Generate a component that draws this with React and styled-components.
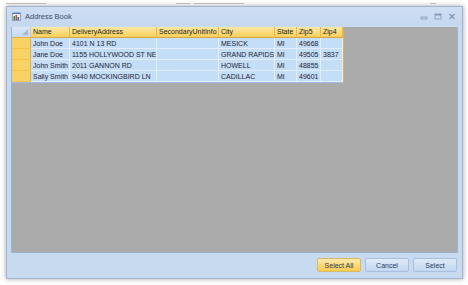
import React from "react";
import styled, { createGlobalStyle } from "styled-components";

const Global = createGlobalStyle`
  html, body { margin: 0; padding: 0; background: #ffffff; }
  body { font-family: "Liberation Sans", Arial, sans-serif; width: 468px; height: 285px; overflow: hidden; }
`;

const Page = styled.div`
  position: relative;
  width: 468px;
  height: 285px;
  padding: 6px 0 0 6px;
  box-sizing: border-box;
`;

const BehindText = styled.div`
  position: absolute;
  top: 3px;
  left: ${(p) => p.$x}px;
  width: ${(p) => p.$w}px;
  height: 1px;
  background: #9a9a9a;
  opacity: 0.6;
`;

const Window = styled.div`
  width: 457px;
  height: 273px;
  box-sizing: border-box;
  border: 1px solid #9fb4d2;
  background: #c8daf0;
  box-shadow: 0 0 5px rgba(0, 0, 0, 0.35);
  display: flex;
  flex-direction: column;
`;

const TitleBar = styled.div`
  height: 18px;
  display: flex;
  align-items: center;
  padding: 0 6px 0 5px;
  background: linear-gradient(#cfdff3, #c4d7ef);
  gap: 4px;
`;

const Title = styled.span`
  font-size: 7.5px;
  color: #3b4d66;
  flex: 1;
  padding-top: 1px;
`;

const Controls = styled.div`
  display: flex;
  gap: 6px;
  align-items: center;
`;

const Body = styled.div`
  flex: 1;
  display: flex;
  flex-direction: column;
  padding: 2px 4px 0 4px;
`;

const GrayArea = styled.div`
  height: 226px;
  box-sizing: border-box;
  background: #ababab;
  border: 1px solid #9db2cf;
  border-top: none;
`;

const Grid = styled.div`
  display: grid;
  grid-template-columns: 19px 39px 87px 62px 56px 22px 24px 22px;
  width: max-content;
  border-right: 1px solid #e2b04c;
  border-bottom: 1px solid #9ec0e6;
`;

const Corner = styled.div`
  height: 11px;
  background: linear-gradient(#dce8f6, #c5d8ef);
  border-right: 1px solid #b8cbe3;
  border-bottom: 1px solid #e2b04c;
  box-sizing: border-box;
  position: relative;
`;

const HeaderCell = styled.div`
  height: 11px;
  box-sizing: border-box;
  background: linear-gradient(#fde9a5, #f9cf5a);
  border-right: 1px solid #e7b656;
  border-bottom: 1px solid #d9a53e;
  font-size: 7px;
  line-height: 10px;
  padding-left: 2px;
  color: #1d1d1d;
  white-space: nowrap;
  overflow: hidden;
`;

const RowHeader = styled.div`
  height: 11px;
  box-sizing: border-box;
  background: #f8d264;
  border-right: 1px solid #e2ad48;
  border-bottom: 1px solid #f6c24d;
`;

const Cell = styled.div`
  height: 11px;
  box-sizing: border-box;
  background: #c4def8;
  border-right: 1px solid #e4eefa;
  border-bottom: 1px solid #e4eefa;
  font-size: 7px;
  line-height: 11px;
  padding-left: 2px;
  color: #1f2430;
  white-space: nowrap;
  overflow: hidden;
`;

const Footer = styled.div`
  display: flex;
  justify-content: flex-end;
  gap: 4px;
  padding: 5px 1px 0 0;
`;

const Button = styled.div`
  width: 44px;
  height: 14px;
  box-sizing: border-box;
  border: 1px solid ${(p) => (p.$active ? "#d8b96a" : "#a8c0df")};
  border-radius: 2px;
  background: ${(p) =>
    p.$active
      ? "linear-gradient(#fdeab0, #fbd96f 55%, #f8cd4f)"
      : "linear-gradient(#dfeaf8, #cfe0f4 55%, #c4d7ef)"};
  font-size: 7px;
  color: #1e3a66;
  display: flex;
  align-items: center;
  justify-content: center;
`;

const columns = ["Name", "DeliveryAddress", "SecondaryUnitInfo", "City", "State", "Zip5", "Zip4"];
const rows = [
  ["John Doe", "4101 N 13 RD", "", "MESICK", "MI", "49668", ""],
  ["Jane Doe", "1155 HOLLYWOOD ST NE", "", "GRAND RAPIDS", "MI", "49505", "3837"],
  ["John Smith", "2011 GANNON RD", "", "HOWELL", "MI", "48855", ""],
  ["Sally Smith", "9440 MOCKINGBIRD LN", "", "CADILLAC", "MI", "49601", ""],
];

const AppIcon = () => (
  <svg width="9" height="9" viewBox="0 0 9 9">
    <rect x="0.5" y="1.5" width="8" height="7" fill="#e9eef5" stroke="#7c8ea8" strokeWidth="0.8" />
    <rect x="1.5" y="4" width="1.5" height="4" fill="#3c8c3c" />
    <rect x="3.5" y="3" width="1.5" height="5" fill="#d04a2a" />
    <rect x="5.5" y="5" width="1.5" height="3" fill="#2a64c4" />
    <rect x="0.5" y="0.5" width="8" height="1.5" fill="#5a7fb8" />
  </svg>
);

const CornerGlyph = () => (
  <svg width="6" height="6" viewBox="0 0 6 6" style={{ position: "absolute", right: 2, bottom: 2 }}>
    <path d="M6 0 L6 6 L0 6 Z" fill="#a9b8cb" />
  </svg>
);

const MinIcon = () => (
  <svg width="8" height="7" viewBox="0 0 8 7">
    <rect x="1" y="4" width="6" height="2" fill="none" stroke="#8497b3" strokeWidth="0.8" />
  </svg>
);
const MaxIcon = () => (
  <svg width="8" height="7" viewBox="0 0 8 7">
    <rect x="1" y="1" width="6" height="5" fill="none" stroke="#8497b3" strokeWidth="0.8" />
    <rect x="1" y="1" width="6" height="1.5" fill="#8497b3" />
  </svg>
);
const CloseIcon = () => (
  <svg width="8" height="7" viewBox="0 0 8 7">
    <path d="M1.5 1 L6.5 6 M6.5 1 L1.5 6" stroke="#8497b3" strokeWidth="1.3" />
  </svg>
);

export default function App() {
  return (
    <>
      <Global />
      <Page>
        <BehindText $x={6} $w={40} />
        <BehindText $x={176} $w={14} />
        <BehindText $x={194} $w={50} />
        <BehindText $x={430} $w={6} />
        <Window>
          <TitleBar>
            <AppIcon />
            <Title>Address Book</Title>
            <Controls>
              <MinIcon />
              <MaxIcon />
              <CloseIcon />
            </Controls>
          </TitleBar>
          <Body>
            <GrayArea>
              <Grid>
                <Corner>
                  <CornerGlyph />
                </Corner>
                {columns.map((c) => (
                  <HeaderCell key={c}>{c}</HeaderCell>
                ))}
                {rows.map((r, i) => (
                  <React.Fragment key={i}>
                    <RowHeader />
                    {r.map((v, j) => (
                      <Cell key={j}>{v}</Cell>
                    ))}
                  </React.Fragment>
                ))}
              </Grid>
            </GrayArea>
            <Footer>
              <Button $active>Select All</Button>
              <Button>Cancel</Button>
              <Button>Select</Button>
            </Footer>
          </Body>
        </Window>
      </Page>
    </>
  );
}
